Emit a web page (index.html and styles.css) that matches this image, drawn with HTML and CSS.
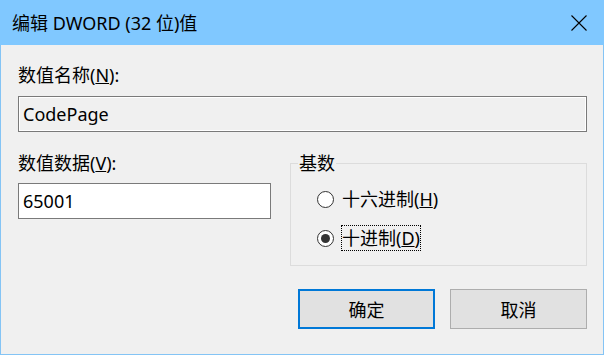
FILE: index.html
```html
<!DOCTYPE html>
<html lang="zh-CN">

<head>
    <meta charset="UTF-8" />
    <title>编辑 DWORD (32 位)值</title>
    <link rel="stylesheet" href="styles.css">
</head>

<body>
    <div class="window">
        <div class="titlebar">
            <span class="title">编辑 DWORD (32 位)值</span>
            <span class="close" aria-label="关闭">
                <svg width="16" height="16" viewBox="0 0 16 16">
                    <path d="M0.5 0.5 L15.5 15.5 M15.5 0.5 L0.5 15.5" stroke="#000" stroke-width="1.1" fill="none" />
                </svg>
            </span>
        </div>

        <div class="content">
            <label class="label first">数值名称(<u>N</u>):</label>
            <div class="textbox readonly">CodePage</div>

            <div class="row">
                <div class="data-col">
                    <label class="label">数值数据(<u>V</u>):</label>
                    <div class="textbox">65001</div>
                </div>

                <fieldset class="group">
                    <legend>基数</legend>
                    <div class="radio">
                        <span class="dot"></span>
                        <span class="radio-text">十六进制(<u>H</u>)</span>
                    </div>
                    <div class="radio checked">
                        <span class="dot"></span>
                        <span class="radio-text focus">十进制(<u>D</u>)</span>
                    </div>
                </fieldset>
            </div>

            <div class="buttons">
                <button class="btn default">确定</button>
                <button class="btn">取消</button>
            </div>
        </div>
    </div>
</body>

</html>
```

FILE: styles.css
```css
* {
    margin: 0;
    padding: 0;
    box-sizing: border-box;
}

body {
    background-color: #f0f0f0;
    color: #000;
    font-family: "Noto Sans", "Noto Sans CJK SC", sans-serif;
    font-size: 18px;
}

.window {
    width: 604px;
    height: 355px;
    border: 1px solid #84c4f5;
    border-top: none;
    background-color: #f0f0f0;
}

.titlebar {
    height: 45px;
    background-color: #80c8ff;
    display: flex;
    align-items: center;
    justify-content: space-between;
    margin: 0 -1px;
    padding-left: 12px;
}

.title {
    font-size: 18px;
    line-height: 24px;
}

.close {
    width: 16px;
    height: 16px;
    margin-right: 17px;
    display: flex;
}

.content {
    padding: 0 16px 0 17px;
}

.label {
    display: block;
    line-height: 24px;
}

.label.first {
    margin-top: 18px;
}

.textbox {
    height: 36px;
    border: 1px solid #7a7a7a;
    background-color: #fff;
    padding-left: 4px;
    line-height: 34px;
    margin-top: 9px;
}

.textbox.readonly {
    background-color: #f0f0f0;
    box-shadow: inset 0 0 0 1px #fff;
}

.row {
    display: flex;
    gap: 19px;
    margin-top: 19px;
}

.data-col {
    width: 253px;
}

.data-col .textbox {
    margin-top: 8px;
}

.group {
    flex: 1;
    height: 115px;
    border: 1px solid #dcdcdc;
    padding: 11px 0 0 7px;
}

.group legend {
    padding: 0 1px;
    line-height: 24px;
}

.radio {
    display: flex;
    align-items: center;
    height: 26px;
    gap: 7px;
    margin-left: 19px;
    margin-bottom: 13px;
}

.dot {
    width: 17px;
    height: 17px;
    border: 1px solid #333;
    border-radius: 50%;
    background-color: #fff;
    display: flex;
    align-items: center;
    justify-content: center;
}

.radio.checked .dot::after {
    content: "";
    width: 9px;
    height: 9px;
    border-radius: 50%;
    background-color: #333;
}

.radio-text {
    line-height: 24px;
    border: 1px dotted transparent;
}

.radio-text.focus {
    border-color: #000;
}

.buttons {
    display: flex;
    justify-content: flex-end;
    gap: 15px;
    margin-top: 23px;
}

.btn {
    width: 137px;
    height: 40px;
    background-color: #e1e1e1;
    border: 1px solid #adadad;
    font-family: inherit;
    font-size: 18px;
    color: #000;
}

.btn.default {
    border: 2px solid #0078d7;
}
```
